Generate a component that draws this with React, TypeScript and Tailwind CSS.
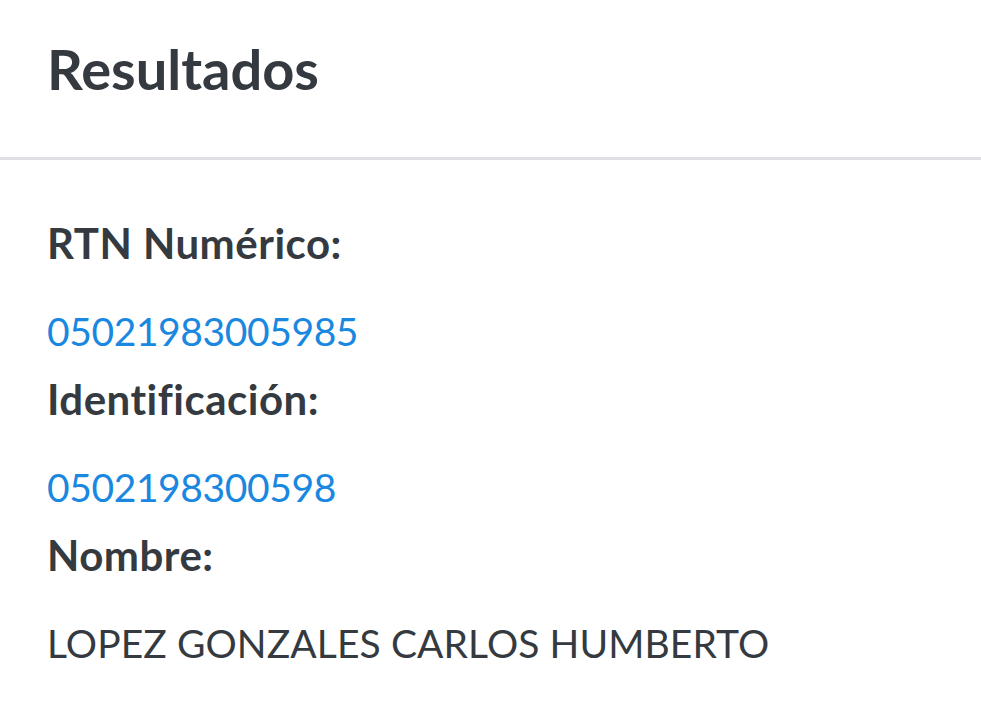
import React from 'react';

const rows = [
  { label: 'RTN Numérico:', value: '05021983005985', link: true },
  { label: 'Identificación:', value: '0502198300598', link: true },
  { label: 'Nombre:', value: 'LOPEZ GONZALES CARLOS HUMBERTO', link: false },
];

export default function App() {
  return (
    <div className="min-h-screen bg-white text-[#343a40]" style={{ fontFamily: 'Lato, "Noto Sans", sans-serif' }}>
      <div className="h-[160px] border-b-[3px] border-[#dee0e3] pl-[47px] pt-[37px]">
        <h1 className="text-[56px] font-bold leading-[64px]">Resultados</h1>
      </div>
      <dl className="px-[47px] pt-[59px]">
        {rows.map((r) => (
          <div key={r.label}>
            <dt className="text-[42px] font-bold leading-[48px] tracking-[0.5px] mb-[40px]">{r.label}</dt>
            <dd
              className={`text-[39px] leading-[48px] mb-[20px] ${
                r.link ? 'text-[#1a88e0] tracking-[-0.4px]' : 'tracking-[0.1px]'
              }`}
            >
              {r.value}
            </dd>
          </div>
        ))}
      </dl>
    </div>
  );
}
